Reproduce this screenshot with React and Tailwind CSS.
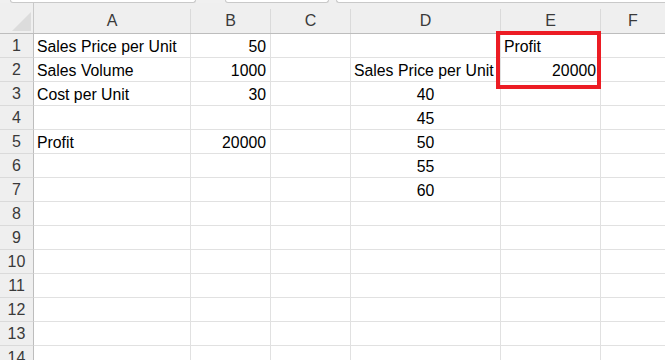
import React from 'react'

const cols = ['A', 'B', 'C', 'D', 'E', 'F']
const widths = ['w-[157px]', 'w-[80px]', 'w-[80px]', 'w-[150px]', 'w-[100px]', 'flex-1']

// cell contents per row: [value, align]
const data = {
    1: { A: ['Sales Price per Unit', 'l'], B: ['50', 'r'], E: ['Profit', 'l'] },
    2: { A: ['Sales Volume', 'l'], B: ['1000', 'r'], D: ['Sales Price per Unit', 'l'], E: ['20000', 'r'] },
    3: { A: ['Cost per Unit', 'l'], B: ['30', 'r'], D: ['40', 'c'] },
    4: { D: ['45', 'c'] },
    5: { A: ['Profit', 'l'], B: ['20000', 'r'], D: ['50', 'c'] },
    6: { D: ['55', 'c'] },
    7: { D: ['60', 'c'] },
}

const alignCls = { l: 'justify-start pl-[3px]', r: 'justify-end pr-[4px]', c: 'justify-center' }

export default function App() {
    const rows = Array.from({ length: 14 }, (_, i) => i + 1)

    return (
        <div className="relative w-[665px] h-[360px] overflow-hidden bg-white text-black" style={{ fontFamily: '"Liberation Sans", Arial, sans-serif' }}>
            {/* top strip with bottoms of the ribbon boxes */}
            <div className="flex h-[3px] bg-[#f0f0f0]">
                <div className="ml-[10px] w-[186px] h-[3px] bg-white border-b border-x border-[#c9c9c9] rounded-b-[3px]" />
                <div className="ml-[29px] w-[104px] h-[3px] bg-white border-b border-x border-[#c9c9c9] rounded-b-[3px]" />
                <div className="ml-[7px] flex-1 h-[3px] bg-white border-b border-l border-[#c9c9c9] rounded-bl-[3px]" />
            </div>

            {/* column header */}
            <div className="flex h-[31px] bg-[#efefef] border-b border-[#bdbdbd]">
                <div className="w-[34px] h-full pt-[9px] pl-[12px] border-r border-[#c9c9c9] flex items-start">
                    <svg width="19" height="19" viewBox="0 0 19 19">
                        <polygon points="19,0 19,19 0,19" fill="#dcdcdc" />
                    </svg>
                </div>
                {cols.map((c, i) => (
                    <div key={c} className={`${widths[i]} h-full flex flex-col`}>
                        <div className="h-[9px]" />
                        <div className={`flex-1 flex items-center justify-center text-[16px] text-[#3a3a3a] ${i < 5 ? 'border-r border-[#dadada]' : ''}`}>
                            {c}
                        </div>
                    </div>
                ))}
            </div>

            {/* body rows */}
            {rows.map((r) => (
                <div key={r} className="flex h-[24px]">
                    <div className="w-[34px] h-full pt-[1px] bg-[#efefef] border-r border-[#bdbdbd] border-b border-b-[#dadada] flex items-center justify-center text-[16px] text-[#3a3a3a]">
                        {r}
                    </div>
                    {cols.map((c, i) => {
                        const cell = data[r] && data[r][c]
                        return (
                            <div
                                key={c}
                                className={`${widths[i]} h-full pt-[2px] border-b border-[#e1e1e1] ${i < 5 ? 'border-r' : ''} flex items-center text-[15.8px] whitespace-nowrap overflow-visible ${cell ? alignCls[cell[1]] : ''}`}
                            >
                                {cell ? cell[0] : ''}
                            </div>
                        )
                    })}
                </div>
            ))}

            {/* red highlight around E1:E2 */}
            <div className="absolute left-[496px] top-[31px] w-[105px] h-[58px] border-[4px] border-[#ec1c24] pointer-events-none" />
        </div>
    )
}
